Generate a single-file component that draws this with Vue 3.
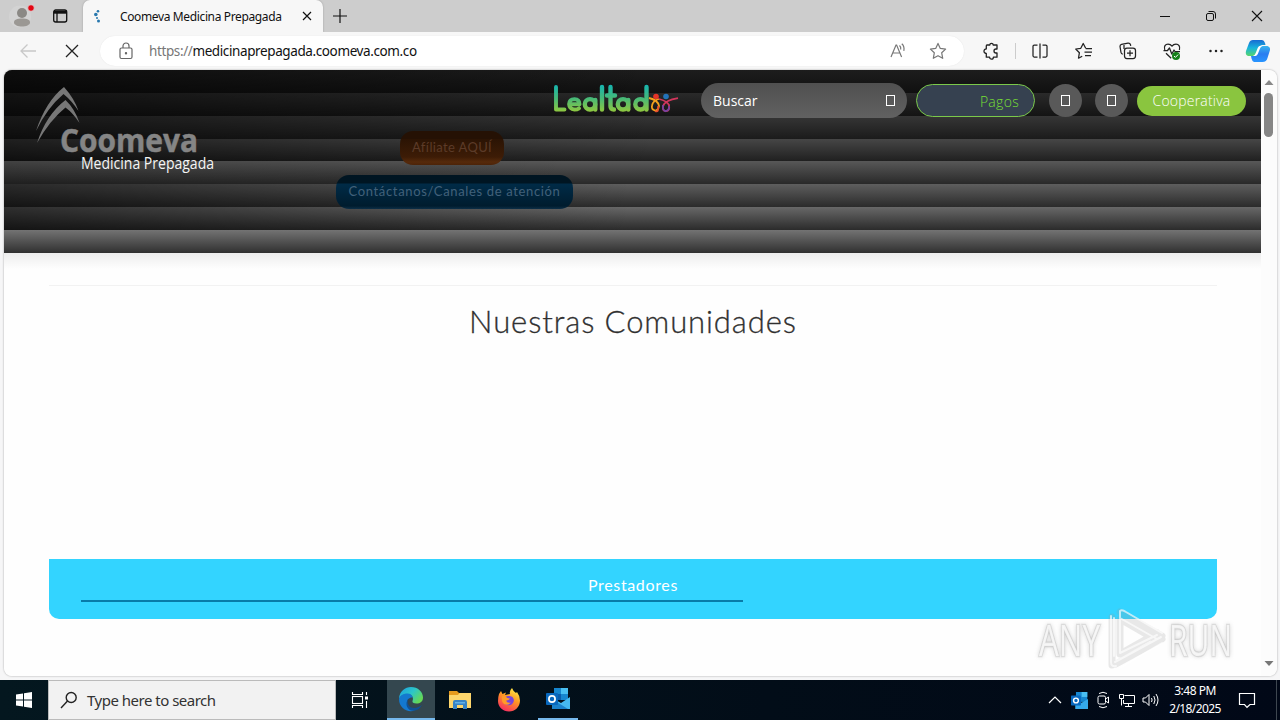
<script setup>
const tools = ['split', 'favorites', 'collections', 'health', 'more']
</script>

<template>
  <div class="desktop">
    <header class="titlebar">
      <div class="profile">
        <svg width="40" height="32" viewBox="0 0 40 32">
          <circle cx="20" cy="16.500" r="11" fill="#d3d3d3" />
          <circle cx="22" cy="13" r="5" fill="#8b8985" />
          <path d="M14 22.500c0-3 3-4 8-4s8 1 8 4c0 2.500-4 4-8 4s-8-1.500-8-4z" fill="#9b9894" />
          <circle cx="31" cy="8" r="3.300" fill="#e30613" stroke="#ddd" stroke-width=".8" />
        </svg>
      </div>
      <div class="tabmenu">
        <svg width="16" height="16" viewBox="0 0 16 16" fill="none" stroke="#111" stroke-width="1.300">
          <rect x="1.700" y="2" width="13" height="12" rx="2" /><path d="M2 4.200h12.500" stroke-width="3" /><path d="M5 5v9" />
        </svg>
      </div>
      <div class="tab">
        <svg class="fav" width="16" height="16" viewBox="0 0 16 16" fill="#2878ae">
          <circle cx="9" cy="3.200" r="1.300" /><circle cx="6.800" cy="6.500" r="1.800" /><circle cx="8" cy="10" r="1" /><circle cx="9.500" cy="13" r="1.500" />
        </svg>
        <span class="tabtitle">Coomeva Medicina Prepagada</span>
        <svg width="10" height="10" viewBox="0 0 10 10" stroke="#111" stroke-width="1.200"><path d="M1 1l8 8M9 1L1 9" /></svg>
      </div>
      <div class="newtab">
        <svg width="14" height="14" viewBox="0 0 14 14" stroke="#111" stroke-width="1.200"><path d="M7 0v14M0 7h14" /></svg>
      </div>
      <div class="wincontrols">
        <svg width="46" height="32" viewBox="0 0 46 32" stroke="#111" fill="none"><path d="M18 16.500h10" /></svg>
        <svg width="46" height="32" viewBox="0 0 46 32" stroke="#111" fill="none"><rect x="18.500" y="13.500" width="7" height="7" rx="1.500" /><path d="M20.500 11.500h4.500q2.500 0 2.500 2.500v4.500" /></svg>
        <svg width="46" height="32" viewBox="0 0 46 32" stroke="#111" fill="none" stroke-width="1.100"><path d="M18 11l10 10M28 11L18 21" /></svg>
      </div>
    </header>

    <div class="toolbar">
      <div class="tool"><svg width="18" height="16" viewBox="0 0 18 16" fill="none" stroke="#c8c8c8" stroke-width="1.300"><path d="M17 8H2M8.500 1.500L2 8l6.500 6.500" /></svg></div>
      <div class="tool"><svg width="14" height="14" viewBox="0 0 14 14" stroke="#222" stroke-width="1.300"><path d="M1 1l12 12M13 1L1 13" /></svg></div>
      <div class="address">
        <svg width="14" height="18" viewBox="0 0 14 18" fill="none" stroke="#666" stroke-width="1.200"><rect x="1" y="6" width="12" height="10.500" rx="1.500" /><path d="M4 6V4a3 3 0 0 1 6 0v2" /><circle cx="7" cy="11.200" r=".6" fill="#666" /></svg>
        <span class="url"><i>https://</i>medicinaprepagada.coomeva.com.co</span>
        <svg width="18" height="18" viewBox="0 0 18 18" fill="none" stroke="#777" stroke-width="1.200"><path d="M2 15L7 3h.6l5 12M3.500 11h7.600M10.500 3.500q1.700 1.500 1.200 4M12.800 1.800q3 2.800 2 7" /></svg>
        <svg class="star" width="18" height="18" viewBox="0 0 18 18" fill="none" stroke="#777" stroke-width="1.200" stroke-linejoin="round"><path d="M9 1.400l2.300 5 5.300.7-3.900 3.700 1 5.500L9 13.700l-4.700 2.600 1-5.500L1.400 7.100l5.300-.7z" /></svg>
      </div>
      <div class="tool ext"><svg width="18" height="18" viewBox="0 0 18 18" fill="none" stroke="#222" stroke-width="1.300" stroke-linejoin="round"><path d="M5 3h2.800a1.700 1.700 0 0 1 3.400 0H15v4h-1a1.900 1.900 0 0 0 0 4h1v4.200h-3.600a1.900 1.900 0 0 1-3.800 0H4.300V11.500a2.300 2.300 0 1 1 0-4.600V4q0-1 .7-1z" /></svg></div>
      <span class="divider"></span>
      <div v-for="t in tools" :key="t" class="tool">
        <svg width="20" height="20" viewBox="0 0 20 20" fill="none" stroke="#222" stroke-width="1.250" stroke-linejoin="round">
          <g v-if="t === 'split'"><path d="M7.500 4H4.200Q3 4 3 5.200v9.600Q3 16 4.200 16h3.300M12.500 4h3.300Q17 4 17 5.200v9.600q0 1.200-1.200 1.200h-3.300M10 2.500v15" /></g>
          <g v-if="t === 'favorites'"><path d="M11.700 7.200L9.200 2.500 6.800 7.300 1.700 8l3.700 3.700-.9 5.500 3.700-2M11.700 7.500H18M10.500 11.200H18M11 14.700h6" /></g>
          <g v-if="t === 'collections'"><rect x="6.500" y="7" width="11" height="10.500" rx="2.500" /><path d="M12 9.200v6M9 12.200h6M4.800 13.200Q3.300 13 3 11.500L2 5.500Q1.900 3.700 3.500 3.300L10 2.200q2-.2 2.500 1.500l.2 1.100M6 4v4" /></g>
          <g v-if="t === 'health'"><path d="M2.800 9C1.500 5.500 3.500 3 6 3c2 0 3.200 1 4 2.200C10.800 4 12 3 14 3c2.500 0 4.500 2.500 3.400 6M1.500 9.500h4l2-2.500 2.300 6 2.200-4 1 1.500h5M4 12.200l5.200 5" /><circle cx="14" cy="15" r="4" fill="#158019" stroke="none" /><path d="M12 15l1.400 1.400 2.700-2.800" stroke="#fff" stroke-width="1" /></g>
          <g v-if="t === 'more'" fill="#222" stroke="none"><circle cx="4.500" cy="10" r="1.250" /><circle cx="10" cy="10" r="1.250" /><circle cx="15.500" cy="10" r="1.250" /></g>
        </svg>
      </div>
      <div class="copilot">
        <svg width="26" height="26" viewBox="0 0 26 26">
          <defs>
            <linearGradient id="cpa" x1="0" y1="0" x2="0" y2="1"><stop offset="0" stop-color="#176bd3" /><stop offset=".5" stop-color="#18b4dc" /><stop offset="1" stop-color="#58d66b" /></linearGradient>
            <linearGradient id="cpb" x1="0" y1="0" x2="0" y2="1"><stop offset="0" stop-color="#36b5ee" /><stop offset=".5" stop-color="#2a7df0" /><stop offset="1" stop-color="#2895ff" /></linearGradient>
          </defs>
          <path d="M8 2h9q2 0 3 3l.5 2H17q-2 0-3 3l-3 6q-1 2-3 2H3q-3-1-2-5L4 5q1-3 4-3z" fill="url(#cpa)" />
          <path d="M18 8h4.500q3 1 2.500 4l-2.500 8q-1 4-5 4H9q-2-1-2.500-3.500L6 18h3q2 0 3-2.500L14.500 10q1-2 3.500-2z" fill="url(#cpb)" />
          <path d="M14.500 8H17q-1.500 1-2.200 3l-2 5q-.8 2-2.800 2H8q1.800-.6 2.700-3l2-5q.6-1.700 1.800-2z" fill="#fff" />
        </svg>
      </div>
    </div>

    <main class="frame">
      <div class="page">
        <section class="hero">
          <nav class="nav">
            <svg class="brand" width="184" height="92" viewBox="0 0 184 92">
              <path d="M1 45Q11 15 29 1Q39 12 43.500 25Q37 15 28.500 8Q12 22 1 45z M2 57Q11 29 30.500 14Q40 23 44.500 37Q38 27 30.500 21.500Q15 34 2 57z" fill="#777" />
              <text x="25" y="66" textLength="138" lengthAdjust="spacingAndGlyphs" class="bname">Coomeva</text>
              <text x="46" y="83" textLength="133" lengthAdjust="spacingAndGlyphs" class="bsub">Medicina Prepagada</text>
            </svg>
            <div class="navright">
              <svg class="lealtad" width="130" height="34" viewBox="0 0 130 34" role="img" aria-label="Lealtad">
                <defs><linearGradient id="lg" x1="0" y1="0" x2="0" y2="28" gradientUnits="userSpaceOnUse"><stop offset="0" stop-color="#12b4b4" /><stop offset=".5" stop-color="#45b979" /><stop offset="1" stop-color="#92c83e" /></linearGradient></defs>
                <g fill="none" stroke="url(#lg)" stroke-width="4.400" stroke-linecap="round" stroke-linejoin="round">
                  <path d="M5 3v22.500h8.500M19 20.300h9.500q0-5-5-5.200-5.200.2-5.400 5 .3 5 5.400 5.400 2.700 0 4.500-1.200" stroke-width="3.900" />
                  <circle cx="39" cy="20.300" r="5.200" /><path d="M44.300 16v9.500M51 3v22.500M59.500 3v19q0 3.500 3.500 3.500M56 11.500h8" /><circle cx="72" cy="20.300" r="5.200" /><path d="M77.300 16v9.500" /><circle cx="89.500" cy="20.300" r="5.200" /><path d="M95.500 3v22.500" />
                </g>
                <g fill="none" stroke-width="1.800">
                  <path d="M98 14q9 2 10 8-1 5-4 4.500-4-1-3-5 1-5 7-6.500" stroke="#f5a31d" />
                  <path d="M107 22q1 7-3 5" stroke="#e64d2e" />
                  <path d="M108 15q8 2 10 6 1 6-3 6.200-4-.5-3-5 2-6 15-8" stroke="#d3365c" />
                  <path d="M112 21q-1 5 2.500 6.200 4-.8 3.500-5" stroke="#7542a1" />
                </g>
                <circle cx="105" cy="12.500" r="2.800" fill="#e53428" /><circle cx="115" cy="12.500" r="2.800" fill="#2373b9" />
              </svg>
              <div class="searchbox"><span>Buscar</span><i class="box"></i></div>
              <div class="pagos">Pagos</div>
              <div class="round"><i class="box"></i></div>
              <div class="round second"><i class="box"></i></div>
              <div class="coop">Cooperativa</div>
            </div>
          </nav>
          <div class="actions">
            <div class="pill orange">Afíliate AQUÍ</div>
            <div class="pill blue">Contáctanos/Canales de atención</div>
          </div>
        </section>
        <div class="fade"></div>
        <section class="communities">
          <h1><span>Nuestras Comunidades</span></h1>
          <div class="provider">
            <span>Prestadores</span>
            <div class="rule"></div>
          </div>
        </section>
      </div>
      <aside class="scrollbar">
        <svg width="15" height="22" viewBox="0 0 15 22"><path d="M3.500 15L8 10l4.500 5z" fill="#888" /></svg>
        <div class="thumb"></div>
        <svg class="down" width="15" height="18" viewBox="0 0 15 18"><path d="M3.500 3h9L8 8z" fill="#777" /></svg>
      </aside>
    </main>

    <svg class="watermark" width="210" height="70" viewBox="0 0 210 70">
      <g class="wmtext">
        <text x="7" y="50" textLength="61" lengthAdjust="spacingAndGlyphs">ANY</text>
        <text x="137" y="50" textLength="63" lengthAdjust="spacingAndGlyphs">RUN</text>
      </g>
      <g fill="none" stroke-linejoin="round" stroke-linecap="round">
        <path d="M80 11v48M88 6l42 24-4 5-38-22v35l37-21M84 58l46-25" stroke="#999" stroke-opacity=".22" stroke-width="7" />
        <path d="M79 10v46q0 5 5 4M82 12v38M88 5v42M88 5q2-2 6 1l36 21M88 12l37 21M88 47l37-18M83 56l46-25M88 62l42-25" stroke="#fff" stroke-opacity=".65" stroke-width="2" />
      </g>
    </svg>

    <footer class="taskbar">
      <div class="start"><svg width="16" height="16" viewBox="0 0 16 16" fill="#fff"><path d="M0 2.500l7-1v6H0zM8 1.300L16 0v7.500H8zM0 8.500h7v6l-7-1zM8 8.500h8V16l-8-1.300z" /></svg></div>
      <div class="search">
        <svg width="18" height="18" viewBox="0 0 18 18" fill="none" stroke="#222" stroke-width="1.400"><circle cx="11.200" cy="6.500" r="5" /><path d="M7.500 10L1 17" /></svg>
        <span>Type here to search</span>
      </div>
      <div class="app view"><svg width="18" height="18" viewBox="0 0 18 18" fill="none" stroke="#fff" stroke-width="1.100"><path d="M1.500 1v2.500h10V1M1.500 17v-2.500h10V17M15.500 1v3M15.500 10v7" /><rect x="1.500" y="5.500" width="10" height="7" /><path d="M14 5.500h3v3h-3z" fill="#fff" stroke="none" /></svg></div>
      <div class="app edge"><svg width="26" height="26" viewBox="0 0 26 26">
        <defs><linearGradient id="ed" x1="0" y1="0" x2="1" y2=".6"><stop offset="0" stop-color="#1b9de2" /><stop offset=".55" stop-color="#2cc6c8" /><stop offset="1" stop-color="#65d855" /></linearGradient></defs>
        <path d="M1 12C2 5 7 1 13 1c7 0 12 5 12 10.500 0 4-3 6-6.500 6-3 0-4.500-1-4-2.500C16 12 14 8 10 8c-4 0-8 2-9 5z" fill="url(#ed)" />
        <path d="M1 13C2 9 6 7.500 9.500 7.500c3 0 5 2 5.200 4C11 11 8.500 14 9 17.500c.5 3.500 4 6.500 8 7C9 27 1 22 1 13z" fill="#1479cf" />
        <path d="M10.500 12.500C8 17 11 22 16 22c3.500 0 6-1.500 8-3.200-2 4-5 5.900-8.500 6C9.500 25 6 18 10.500 12.500z" fill="#105195" />
      </svg></div>
      <div class="app"><svg width="22" height="20" viewBox="0 0 22 20"><path d="M0 1h8l2 2h11v5H0z" fill="#e69b1e" /><path d="M0 5h9l1.500-2H22v15H0z" fill="#fdd66c" /><path d="M4 19v-7q0-2 2-2h10q2 0 2 2v7h-4v-4H8v4z" fill="#3884c5" /><path d="M6 12h10v1.500H6z" fill="#62b1e7" /></svg></div>
      <div class="app"><svg width="24" height="24" viewBox="0 0 24 24">
        <defs><linearGradient id="ff" x1=".8" y1="0" x2=".3" y2="1"><stop offset="0" stop-color="#fff04a" /><stop offset=".45" stop-color="#ff9823" /><stop offset="1" stop-color="#f72b62" /></linearGradient></defs>
        <path d="M2 6l2-3 1.500 3L9 4.500 8 7l5-1q-1-3 2-6 1 3 4 5l1-1q3 4 3 8.500C23 19 18 23.500 12 23.500S1 19 1 13q0-4 1-7z" fill="url(#ff)" />
        <path d="M8 9q4-2 7.500 0Q18 12 16 15q-2 3-6 2-4-1-3-5l3 .5 1.500-1.500z" fill="#7745dc" /><path d="M5 8q4-1 5 2l3 .5q-1 2-4 2 1 3 5 2-3 3.500-7 1.500Q4 14 5 8z" fill="#ff9c28" />
      </svg></div>
      <div class="app outlook"><svg width="24" height="24" viewBox="0 0 24 24"><path d="M8 1h14v12H8z" fill="#1686cf" /><path d="M15 1h7v6h-7z" fill="#49bff2" /><path d="M8 7h7v6H8z" fill="#0a5cab" /><path d="M6 11l9 5 9-6v12H6z" fill="#46b9ef" /><path d="M6 12l16 10H6z" fill="#1b82cc" /><rect y="6" width="12" height="12" rx="1" fill="#0868be" /><circle cx="6" cy="12" r="3.100" fill="none" stroke="#fff" stroke-width="1.700" /></svg></div>
      <div class="tray">
        <div><svg width="14" height="14" viewBox="0 0 14 14" fill="none" stroke="#fff" stroke-width="1.200"><path d="M1 10l6-6 6 6" /></svg></div>
        <div><svg width="17" height="17" viewBox="0 0 24 24"><path d="M7 0h16v14H7z" fill="#1686cf" /><path d="M15 0h8v7h-8z" fill="#49bff2" /><path d="M6 11l9 4 9-5v14H6z" fill="#35aaeb" /><rect y="5" width="14" height="14" rx="1" fill="#0868be" /><circle cx="7" cy="12" r="3.400" fill="none" stroke="#fff" stroke-width="2" /></svg></div>
        <div><svg width="16" height="18" viewBox="0 0 16 18" fill="none" stroke="#fff"><rect x="3" y="5" width="7.500" height="8" rx="1.500" /><path d="M10.500 8l3-2v6l-3-2M4 2.500q4-2.500 8 0M4 15.500q4 2.500 8 0" /></svg></div>
        <div><svg width="18" height="16" viewBox="0 0 18 16" fill="none" stroke="#fff"><path d="M6.500 3.500h10v8h-11V8M10.500 11.500v3M7 14.500h7M1.500 2.500h4v4h-4zM3.500 6.500v7" /></svg></div>
        <div><svg width="18" height="16" viewBox="0 0 18 16" fill="none" stroke="#fff"><path d="M1 6h2.500L7 2.500v11L3.500 10H1zM9.500 6q1.200 2 0 4M11.800 4q2.500 4 0 8M14 2q4 6 0 12" /></svg></div>
      </div>
      <div class="clock"><span>3:48 PM</span><span class="date">2/18/2025</span></div>
      <div class="notify"><svg width="18" height="18" viewBox="0 0 18 18" fill="none" stroke="#fff" stroke-width="1.200"><path d="M1.500 2.500h15v11H12L9 16.300 6.500 13.500h-5z" /></svg></div>
    </footer>
  </div>
</template>

<style>
body { margin: 0; overflow: hidden; }
</style>

<style scoped>
.desktop { position: relative; width: 1280px; height: 720px; overflow: hidden; background: #f6f6f7; font-family: "Noto Sans", "Open Sans", sans-serif; display: flex; flex-direction: column; }
svg { display: block; flex: none; }
.titlebar { height: 32px; background: #cdcdcd; display: flex; flex: none; }
.profile { width: 40px; }
.tabmenu { width: 40px; display: flex; align-items: center; justify-content: center; }
.tab { margin-left: 3px; width: 240px; box-sizing: border-box; background: #f7f7f7; border-radius: 7px 7px 0 0; display: flex; align-items: center; padding-left: 6px; box-shadow: 0 0 2px #999; }
.tabtitle { font-size: 12px; margin-left: 15px; width: 182px; white-space: nowrap; color: #111; letter-spacing: -.37px; }
.newtab { width: 34px; display: flex; align-items: center; justify-content: center; }
.wincontrols { display: flex; margin-left: auto; }
.toolbar { height: 38px; flex: none; background: #f7f7f7; display: flex; align-items: center; padding-left: 6px; }
.tool { width: 44px; flex: none; display: flex; align-items: center; justify-content: center; }
.address { margin-left: 6px; width: 864px; height: 30px; box-sizing: border-box; background: #fff; border-radius: 15px; display: flex; align-items: center; padding: 0 17px 0 19px; box-shadow: 0 0 1px #ddd; }
.url { font-size: 13.500px; color: #111; margin-left: 16px; flex: 1; letter-spacing: -.39px; }
.url i { font-style: normal; color: #777; }
.star { margin-left: 22px; }
.ext { margin-left: 5px; }
.divider { width: 1px; height: 16px; background: #ccc; margin: 0 2px; }
.copilot { width: 40px; display: flex; justify-content: center; }
.frame { margin: 0 3px 0 4px; height: 606px; flex: none; background: #fdfdfd; border-radius: 8px; overflow: hidden; display: flex; box-shadow: 0 0 2px #999; }
.page { width: 1257px; background: #fefefe; }
.hero { height: 183px; background:
  linear-gradient(90deg, rgba(0,0,0,.55), transparent 52%) 0 0 / 100% 91px no-repeat,
  linear-gradient(90deg, rgba(0,0,0,.25), transparent 45%) 0 91px / 100% 23px no-repeat,
  linear-gradient(90deg, rgba(0,0,0,.55), transparent 50%) 0 114px / 100% 46px no-repeat,
  linear-gradient(#1d1d1d 0, #101010 23px, #2a2a2a 23px, #141414 46px, #363636 46px, #1b1b1b 69px, #464646 69px, #202020 91px, #585858 91px, #292929 114px, #5e5e5e 114px, #2b2b2b 137px, #686868 137px, #2b2b2b 160px, #737373 160px, #303030 183px); }
.nav { display: flex; height: 61px; }
.brand { margin: 16px 0 0 31px; overflow: visible; }
.bname { font: 700 32px "Open Sans", sans-serif; fill: #858585; stroke: #858585; stroke-width: .5px; }
.bsub { font: 500 16px "Open Sans", sans-serif; fill: #f5f5f5; }
.navright { margin-left: auto; display: flex; align-items: center; height: 61px; padding-right: 15px; font-family: "Open Sans", sans-serif; }
.lealtad { margin-right: 20px; }
.searchbox { width: 206px; height: 35px; border-radius: 18px; box-sizing: border-box; background: linear-gradient(#505050, #616161); display: flex; align-items: center; justify-content: space-between; padding: 0 12px; color: #fff; font-size: 14px; }
.box { width: 9px; height: 11px; box-sizing: border-box; border: 1px solid #fff; }
.pagos { width: 119px; height: 33px; margin: -1px 0 0 9px; border: 1px solid #7bc94a; border-radius: 17px; box-sizing: border-box; background: #364150; color: #77df35; text-align: right; padding-right: 15px; line-height: 33px; font-size: 14px; letter-spacing: .3px; font-weight: 300; }
.round { width: 33px; height: 33px; border-radius: 50%; background: #595959; margin-left: 14px; display: flex; align-items: center; justify-content: center; }
.second { margin-left: 13px; }
.coop { margin-left: 9px; width: 109px; height: 30px; border-radius: 15px; background: #8ac53f; color: #fff; font: 300 14px/30px "Open Sans", sans-serif; text-align: center; letter-spacing: .2px; }
.actions { display: flex; flex-direction: column; align-items: flex-start; gap: 10px; }
.pill { box-sizing: border-box; text-align: center; font-family: Lato, sans-serif; border-radius: 13px; font-size: 13px; height: 34px; line-height: 33px; white-space: nowrap; }
.orange { width: 104px; margin-left: 396px; color: #5c3b28; letter-spacing: .35px; background: linear-gradient(#251104 0 8px, #2b1404 8px, #3d1c06 26px, #562a0b 31px, #4c2308); }
.blue { width: 237px; margin-left: 332px; color: #42617a; background: linear-gradient(#001522 0 8px, #002b47 9px, #001c2e 31px, #0d2f47); letter-spacing: .65px; }
.fade { height: 16px; background: linear-gradient(#ededed, #fefefe); }
.communities { margin: 16px 44px 0 45px; border-top: 1px solid #f2f2f2; height: 334px; }
h1 { margin: 0; height: 273px; font: 300 31px/70px "Lato", sans-serif; color: #303030; text-align: center; letter-spacing: .9px; -webkit-text-stroke: .3px #303030; }
.provider { height: 60px; box-sizing: border-box; padding: 14px 32px 0; border-radius: 0 0 10px 10px; background: #33d4ff; color: #fff; text-align: center; font: 400 16px/24px Lato, sans-serif; letter-spacing: .65px; }
.provider span { display: block; }
.rule { width: 662px; height: 2px; background: #087ba9; margin-top: 3px; }
.scrollbar { width: 16px; background: #fcfcfc; display: flex; flex-direction: column; }
.thumb { width: 9px; height: 44px; border-radius: 5px; background: #868686; margin: 1px 0 0 3px; }
.down { margin-top: auto; }
.watermark { position: absolute; left: 1032px; top: 606px; overflow: visible; }
.wmtext { font: 400 43px "Open Sans", sans-serif; fill: rgba(255,255,255,.75); stroke: rgba(165,165,165,.28); stroke-width: 2.500px; paint-order: stroke; filter: drop-shadow(0 0 2px rgba(120,120,120,.45)); }
.taskbar { margin-top: 4px; height: 40px; flex: none; display: flex; background: linear-gradient(90deg, #04171f, #020d18 60%, #010817); color: #fff; }
.start { width: 48px; display: flex; align-items: center; justify-content: center; }
.search { width: 288px; box-sizing: border-box; background: #f2f2f2; border: 1px solid #bbb; display: flex; align-items: center; padding-left: 11px; color: #333; font-size: 15px; }
.search span { margin-left: 9px; letter-spacing: -.5px; white-space: nowrap; }
.app { width: 49px; box-sizing: border-box; display: flex; align-items: center; justify-content: center; }
.view { width: 51px; padding-right: 3px; }
.edge { width: 48px; background: #34474f; border-bottom: 2px solid #76b9ed; }
.outlook { width: 40px; margin-left: 5px; border-bottom: 2px solid #76b9ed; }
.tray { margin-left: auto; display: flex; }
.tray div { width: 24px; display: flex; align-items: center; justify-content: center; }
.clock { width: 64px; display: flex; flex-direction: column; align-items: center; font-size: 12px; line-height: 18px; padding-top: 2px; letter-spacing: -.5px; }
.notify { width: 40px; display: flex; align-items: center; justify-content: center; margin-right: 3px; padding-right: 9px; border-right: 1px solid #3e4750; }
.date { letter-spacing: -.6px; }
</style>
